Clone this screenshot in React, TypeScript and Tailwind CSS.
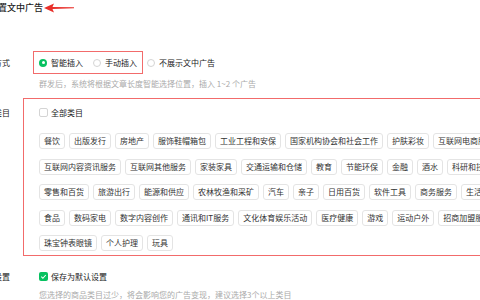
import React from 'react';

const rows: string[][] = [
  ['餐饮', '出版发行', '房地产', '服饰鞋帽箱包', '工业工程和安保', '国家机构协会和社会工作', '护肤彩妆', '互联网电商服务'],
  ['互联网内容资讯服务', '互联网其他服务', '家装家具', '交通运输和仓储', '教育', '节能环保', '金融', '酒水', '科研和技术服务'],
  ['零售和百货', '旅游出行', '能源和供应', '农林牧渔和采矿', '汽车', '亲子', '日用百货', '软件工具', '商务服务', '生活服务'],
  ['食品', '数码家电', '数字内容创作', '通讯和IT服务', '文化体育娱乐活动', '医疗健康', '游戏', '运动户外', '招商加盟服务'],
  ['珠宝钟表眼镜', '个人护理', '玩具'],
];

const Radio = ({ checked, label }: { checked?: boolean; label: string }) => (
  <div className="flex items-center gap-[4px]">
    {checked ? (
      <span className="w-[8px] h-[8px] rounded-full bg-[#07c160] flex items-center justify-center">
        <span className="w-[3px] h-[3px] rounded-full bg-white" />
      </span>
    ) : (
      <span className="w-[8px] h-[8px] rounded-full border border-[#d4d4d4] bg-white" />
    )}
    <span className="text-[#222]">{label}</span>
  </div>
);

const Label = ({ text, className = '' }: { text: string; className?: string }) => (
  <div className={`w-[60px] -ml-[50px] shrink-0 text-right text-[#222] ${className}`}>{text}</div>
);

export default function App() {
  return (
    <div
      className="w-[480px] h-[300px] overflow-hidden bg-white text-[8px] leading-[10px]"
      style={{ fontFamily: '"Noto Sans CJK SC", "Noto Sans", sans-serif' }}
    >
      {/* title */}
      <div className="flex items-center h-[15px]">
        <span className="-ml-[11px] text-[9px] font-medium text-[#222]">设置文中广告</span>
        <svg width="30" height="10" viewBox="0 0 30 10" className="ml-[1px]">
          <polygon points="0,5 10,0.5 8.5,3.9 30,4.3 30,5.2 8.5,6.1 10,9.5" fill="#e8302b" />
        </svg>
      </div>

      {/* insert mode */}
      <div className="flex items-center mt-[36px]">
        <Label text="插入方式" />
        <div className="ml-[29px] flex items-center">
          <div className="-ml-[6px] h-[23px] pl-[5px] pr-[5px] border border-[#f26b6b] flex items-center gap-[10px]">
            <Radio checked label="智能插入" />
            <Radio label="手动插入" />
          </div>
          <div className="ml-[4px]">
            <Radio label="不展示文中广告" />
          </div>
        </div>
      </div>
      <div className="ml-[39px] mt-[5px] text-[#aaa] whitespace-nowrap">
        群发后，系统将根据文章长度智能选择位置，插入 1~2 个广告
      </div>

      {/* categories */}
      <div className="flex mt-[9px]">
        <Label text="商品类目" className="mt-[10px] leading-[9px]" />
        <div className="ml-[13px] w-[700px] shrink-0 border border-[#f26b6b] pl-[15px] pt-[9px] pb-[4px]">
          <div className="flex items-center gap-[3px] h-[9px]">
            <span className="w-[9px] h-[9px] rounded-[2px] border border-[#d4d4d4] bg-white" />
            <span className="text-[#222]">全部类目</span>
          </div>
          <div className="mt-[16px] flex flex-col gap-[9.5px]">
            {rows.map((row, i) => (
              <div key={i} className="flex gap-[4px]">
                {row.map((t) => (
                  <span
                    key={t}
                    className="h-[16px] px-[4px] flex items-center whitespace-nowrap border border-[#e4e4e4] rounded-[3px] text-[#333]"
                  >
                    {t}
                  </span>
                ))}
              </div>
            ))}
          </div>
        </div>
      </div>

      {/* default */}
      <div className="flex items-center mt-[16px] h-[9px]">
        <Label text="默认设置" />
        <div className="ml-[29px] flex items-center gap-[3px]">
          <span className="w-[9px] h-[9px] rounded-[2px] bg-[#07c160] flex items-center justify-center">
            <svg width="7" height="7" viewBox="0 0 8 8">
              <path d="M1.5 4.2 L3.3 6 L6.6 2.3" stroke="white" strokeWidth="1.2" fill="none" />
            </svg>
          </span>
          <span className="text-[#222]">保存为默认设置</span>
        </div>
      </div>
      <div className="ml-[39px] mt-[9px] text-[#aaa] whitespace-nowrap">
        您选择的商品类目过少，将会影响您的广告变现，建议选择3个以上类目
      </div>
    </div>
  );
}
